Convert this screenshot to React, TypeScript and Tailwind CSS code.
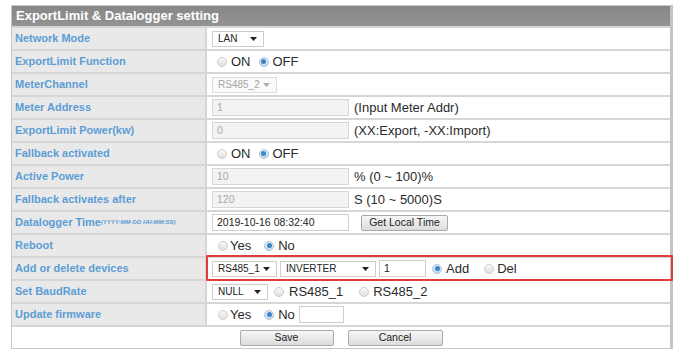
import React from "react";

const font = { fontFamily: '"Liberation Sans", Arial, sans-serif' };

function Caret({ gray }: { gray?: boolean }) {
  return (
    <svg width="7" height="4" viewBox="0 0 7 4" className="shrink-0">
      <polygon points="0,0 7,0 3.5,4" fill={gray ? "#b0b0b0" : "#222"} />
    </svg>
  );
}

function Select({ text, w, disabled }: { text: string; w: string; disabled?: boolean }) {
  return (
    <div
      className={`${w} h-[16px] flex items-center justify-between pl-[5px] pr-[6px] border text-[10px] leading-none ${
        disabled ? "border-[#dcdcdc] text-[#a5a5a5] bg-[#fafafa]" : "border-[#cdcdcd] text-[#222] bg-white"
      }`}
    >
      <span>{text}</span>
      <Caret gray={disabled} />
    </div>
  );
}

function Input({ text, w, disabled }: { text: string; w: string; disabled?: boolean }) {
  return (
    <div
      className={`${w} h-[17px] flex items-center pl-[4px] border text-[10.5px] leading-none ${
        disabled ? "border-[#d6d6d6] bg-[#f3f3f3] text-[#a8a8a8]" : "border-[#cfcfcf] bg-white text-[#222]"
      }`}
    >
      {text}
    </div>
  );
}

function Radio({ checked }: { checked?: boolean }) {
  return (
    <span
      className={`w-[10px] h-[10px] rounded-full border flex items-center justify-center shrink-0 ${
        checked
          ? "border-[#a8c4dc] bg-linear-to-b from-[#e6f0f8] to-[#c4d8ea]"
          : "border-[#cdcdcd] bg-linear-to-b from-[#f8f8f8] to-[#e0e0e0]"
      }`}
    >
      {checked && <span className="w-[5px] h-[5px] rounded-full bg-[#3a86c8]" />}
    </span>
  );
}

function Btn({ text, w }: { text: string; w: string }) {
  return (
    <div
      className={`${w} h-[16px] flex items-center justify-center border border-[#a9a9a9] rounded-[2px] bg-linear-to-b from-[#f7f7f7] to-[#dcdcdc] text-[10.5px] text-[#222] leading-none`}
    >
      {text}
    </div>
  );
}

function Row({ label, children }: { label: React.ReactNode; children?: React.ReactNode }) {
  return (
    <div className="flex h-[23px] border-t-2 border-[#d6d6d6]">
      <div className="w-[195px] shrink-0 bg-[#e9e9e9] border-r-2 border-[#d6d6d6] flex items-center pl-[3px] text-[11px] font-bold text-[#5c9dd5] whitespace-nowrap">
        {label}
      </div>
      <div className="flex-1 bg-white flex items-center text-[13px] text-[#2a2a2a] whitespace-nowrap">
        {children}
      </div>
    </div>
  );
}

function OnOff() {
  return (
    <>
      <span className="ml-[10px]"><Radio /></span>
      <span className="ml-[4px]">ON</span>
      <span className="ml-[8px]"><Radio checked /></span>
      <span className="ml-[4px]">OFF</span>
    </>
  );
}

function YesNo() {
  return (
    <>
      <span className="ml-[11px]"><Radio /></span>
      <span className="ml-[2px]">Yes</span>
      <span className="ml-[13px]"><Radio checked /></span>
      <span className="ml-[4px]">No</span>
    </>
  );
}

export default function App() {
  return (
    <div className="w-[680px] h-[356px] bg-white relative overflow-hidden" style={font}>
      <div className="ml-[11px] mt-[5px] w-[662px] border-l border-r-[3px] border-t border-b border-[#c8c8c8] border-r-[#c4c4c4]">
        <div className="h-[20px] bg-linear-to-b from-[#878787] to-[#939393] flex items-center pl-[4px] text-[13px] font-bold text-white">
          ExportLimit &amp; Datalogger setting
        </div>
        <Row label="Network Mode">
          <span className="ml-[5px]"><Select text="LAN" w="w-[52px]" /></span>
        </Row>
        <Row label="ExportLimit Function">
          <OnOff />
        </Row>
        <Row label="MeterChannel">
          <span className="ml-[5px]"><Select text="RS485_2" w="w-[65px]" disabled /></span>
        </Row>
        <Row label="Meter Address">
          <span className="ml-[5px]"><Input text="1" w="w-[137px]" disabled /></span>
          <span className="ml-[5px]">(Input Meter Addr)</span>
        </Row>
        <Row label="ExportLimit Power(kw)">
          <span className="ml-[5px]"><Input text="0" w="w-[137px]" disabled /></span>
          <span className="ml-[5px]">(XX:Export, -XX:Import)</span>
        </Row>
        <Row label="Fallback activated">
          <OnOff />
        </Row>
        <Row label="Active Power">
          <span className="ml-[5px]"><Input text="10" w="w-[137px]" disabled /></span>
          <span className="ml-[5px]">% (0 ~ 100)%</span>
        </Row>
        <Row label="Fallback activates after">
          <span className="ml-[5px]"><Input text="120" w="w-[137px]" disabled /></span>
          <span className="ml-[5px]">S (10 ~ 5000)S</span>
        </Row>
        <Row
          label={
            <>
              Datalogger Time
              <span className="text-[6px] italic">(YYYY-MM-DD HH:MM:SS)</span>
            </>
          }
        >
          <span className="ml-[5px]"><Input text="2019-10-16 08:32:40" w="w-[137px]" /></span>
          <span className="ml-[12px]"><Btn text="Get Local Time" w="w-[87px]" /></span>
        </Row>
        <Row label="Reboot">
          <YesNo />
        </Row>
        <Row label="Add or delete devices">
          <span className="ml-[5px]"><Select text="RS485_1" w="w-[65px]" /></span>
          <span className="ml-[3px]"><Select text="INVERTER" w="w-[96px]" /></span>
          <span className="ml-[3px]"><Input text="1" w="w-[47px]" /></span>
          <span className="ml-[6px]"><Radio checked /></span>
          <span className="ml-[4px]">Add</span>
          <span className="ml-[15px]"><Radio /></span>
          <span className="ml-[3px]">Del</span>
        </Row>
        <Row label="Set BaudRate">
          <span className="ml-[5px]"><Select text="NULL" w="w-[56px]" /></span>
          <span className="ml-[6px]"><Radio /></span>
          <span className="ml-[5px]">RS485_1</span>
          <span className="ml-[16px]"><Radio /></span>
          <span className="ml-[4px]">RS485_2</span>
        </Row>
        <Row label="Update firmware">
          <YesNo />
          <span className="ml-[4px]"><Input text="" w="w-[45px]" /></span>
        </Row>
        <div className="flex h-[23px] border-t-2 border-[#d6d6d6] bg-white items-center justify-center gap-[14px]">
          <Btn text="Save" w="w-[94px]" />
          <Btn text="Cancel" w="w-[95px]" />
        </div>
      </div>
      <div className="absolute left-[206px] top-[255px] w-[467px] h-[26px] border-2 border-[#e23b3b] rounded-[1px] pointer-events-none" />
    </div>
  );
}
